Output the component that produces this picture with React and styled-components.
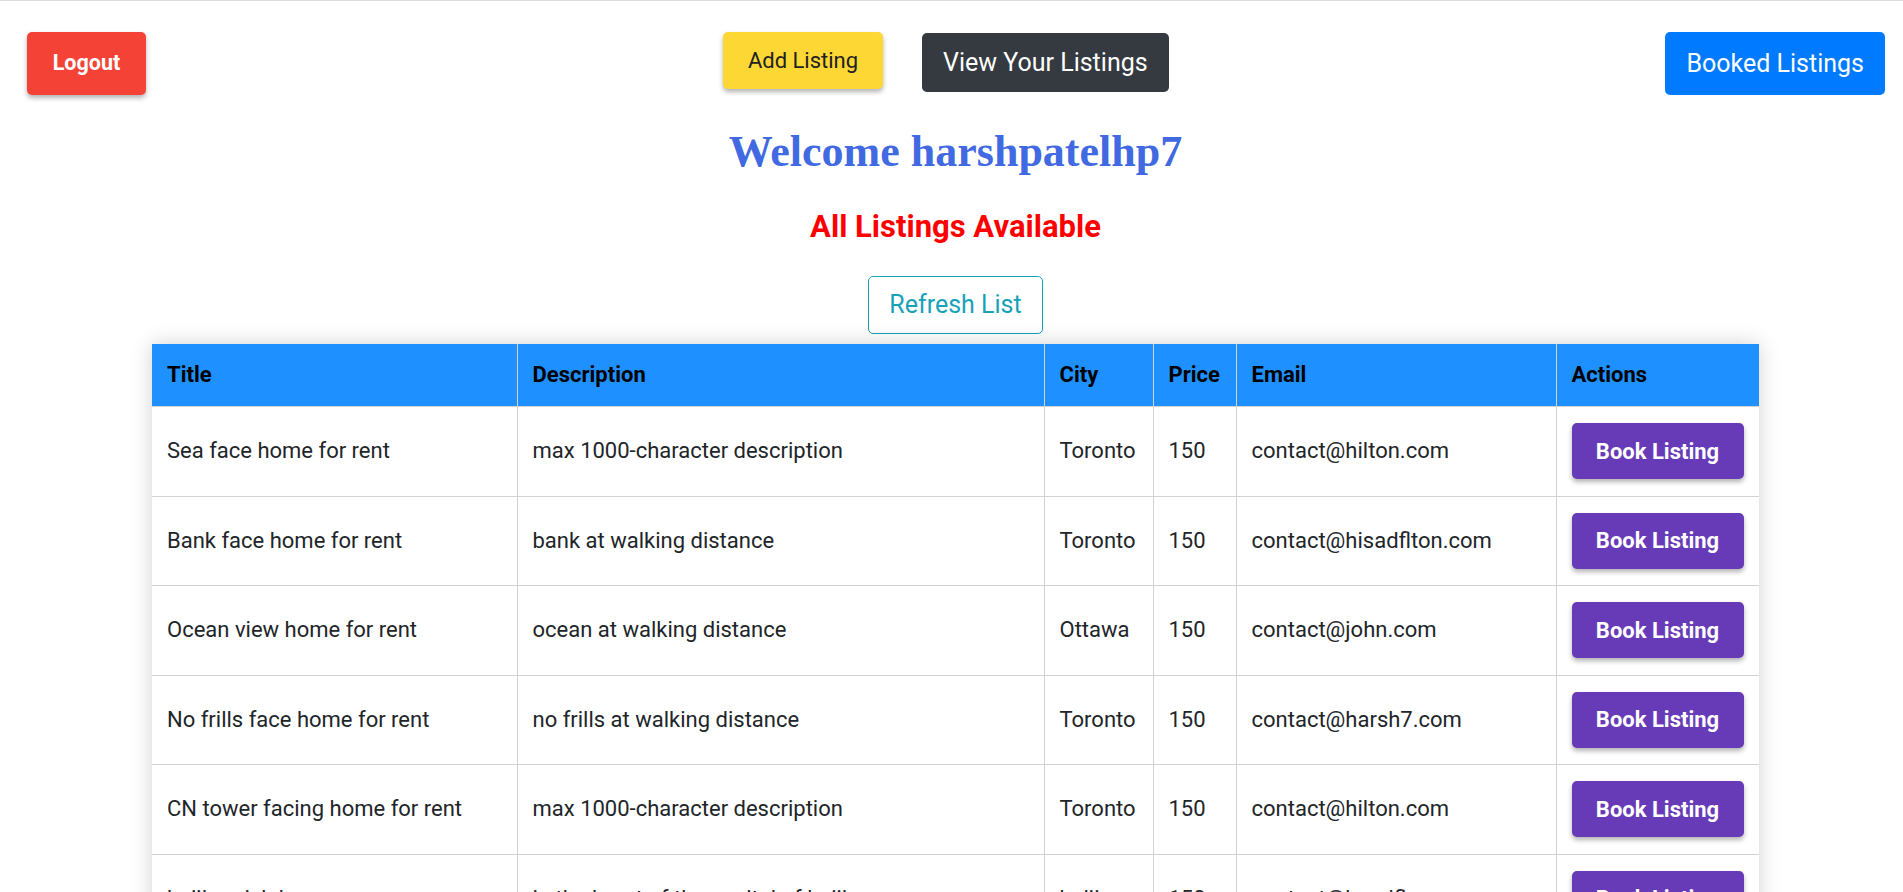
import React from 'react'
import styled, { createGlobalStyle } from 'styled-components'

const GlobalStyle = createGlobalStyle`
  html, body {
    margin: 0;
    padding: 0;
    overflow: hidden;
    background: #fff;
  }
  body {
    font-family: Roboto, "Liberation Sans", Arial, sans-serif;
    color: #212529;
  }
`

const Page = styled.div`
  border-top: 1px solid #dcdcdc;
`

const NavBar = styled.div`
  display: flex;
  align-items: flex-start;
  padding: 31px 18px 0 27px;
`

const NavGroup = styled.div`
  display: flex;
  align-items: flex-start;
  gap: 39px;
  margin-left: 577px;
`

const Btn = styled.button`
  font-family: Roboto, "Liberation Sans", Arial, sans-serif;
  border: 1px solid transparent;
  border-radius: 5px;
  cursor: pointer;
  line-height: 1.5;
  display: inline-flex;
  align-items: center;
  justify-content: center;
`

const LogoutButton = styled(Btn)`
  background: #f44336;
  color: #fff;
  font-size: 21.5px;
  font-weight: 700;
  height: 63px;
  width: 119px;
  padding: 0;
  box-shadow: 0 3px 5px rgba(0, 0, 0, 0.3);
`

const AddButton = styled(Btn)`
  background: #fdd835;
  color: #212121;
  font-size: 22px;
  height: 57px;
  width: 160px;
  padding: 0;
  box-shadow: 0 3px 5px rgba(0, 0, 0, 0.3);
`

const LargeButton = styled(Btn)`
  background: ${p => p.$bg};
  color: #fff;
  font-size: 25px;
  height: ${p => p.$h}px;
  padding: 0 20px;
  margin-top: ${p => p.$top || 0}px;
  margin-left: ${p => (p.$push ? 'auto' : '0')};
`

const Content = styled.div`
  padding-left: 8px;
  display: flex;
  flex-direction: column;
  align-items: center;
`

const Welcome = styled.h1`
  font-family: "Liberation Serif", "Times New Roman", serif;
  font-weight: 700;
  font-size: 44px;
  line-height: 50px;
  color: royalblue;
  margin: 32px 0 0;
`

const SubTitle = styled.h2`
  font-size: 31px;
  line-height: 36px;
  font-weight: 700;
  color: red;
  margin: 32px 0 0;
`

const RefreshButton = styled(Btn)`
  margin-top: 31px;
  background: #fff;
  color: #17a2b8;
  border-color: #17a2b8;
  font-size: 25px;
  height: 58px;
  padding: 0 20px;
`

const Table = styled.table`
  margin-top: 10px;
  width: 1607px;
  table-layout: fixed;
  border-collapse: collapse;
  box-shadow: 0 0 20px rgba(0, 0, 0, 0.18);
  background: #fff;
`

const Th = styled.th`
  background: #1e90ff;
  color: #000;
  font-size: 22px;
  font-weight: 700;
  text-align: left;
  line-height: 30px;
  padding: 16px 15px;
  border-left: 1px solid #d3d3d3;
  border-bottom: 1px solid #d3d3d3;
  &:first-child { border-left: none; }
`

const Td = styled.td`
  font-size: 22px;
  line-height: 30px;
  padding: 16.25px 15px;
  vertical-align: middle;
  color: #212529;
  border-left: 1px solid #d3d3d3;
  border-bottom: 1px solid #d3d3d3;
  white-space: nowrap;
  overflow: hidden;
  &:first-child { border-left: none; }
`

const BookButton = styled(Btn)`
  background: #673ab7;
  color: #fff;
  font-size: 22px;
  font-weight: 700;
  height: 56px;
  width: 172px;
  padding: 0;
  box-shadow: 0 3px 5px rgba(0, 0, 0, 0.3);
`

const columns = [
  { name: 'Title', width: 365 },
  { name: 'Description', width: 527 },
  { name: 'City', width: 109 },
  { name: 'Price', width: 83 },
  { name: 'Email', width: 320 },
  { name: 'Actions', width: 203 },
]

const listings = [
  ['Sea face home for rent', 'max 1000-character description', 'Toronto', '150', 'contact@hilton.com'],
  ['Bank face home for rent', 'bank at walking distance', 'Toronto', '150', 'contact@hisadflton.com'],
  ['Ocean view home for rent', 'ocean at walking distance', 'Ottawa', '150', 'contact@john.com'],
  ['No frills face home for rent', 'no frills at walking distance', 'Toronto', '150', 'contact@harsh7.com'],
  ['CN tower facing home for rent', 'max 1000-character description', 'Toronto', '150', 'contact@hilton.com'],
  ['beijing rich home', 'in the heart of the capital of beijing', 'beijing', '150', 'contact@beadfl.com'],
]

export default function App() {
  return (
    <Page>
      <GlobalStyle />
      <NavBar>
        <LogoutButton>Logout</LogoutButton>
        <NavGroup>
          <AddButton>Add Listing</AddButton>
          <LargeButton $bg="#343a40" $h={59} $top={1}>View Your Listings</LargeButton>
        </NavGroup>
        <LargeButton $bg="#007bff" $h={63} $push>Booked Listings</LargeButton>
      </NavBar>
      <Content>
        <Welcome>Welcome harshpatelhp7</Welcome>
        <SubTitle>All Listings Available</SubTitle>
        <RefreshButton>Refresh List</RefreshButton>
        <Table>
          <colgroup>
            {columns.map(c => <col key={c.name} style={{ width: c.width }} />)}
          </colgroup>
          <thead>
            <tr>
              {columns.map(c => <Th key={c.name}>{c.name}</Th>)}
            </tr>
          </thead>
          <tbody>
            {listings.map((row, i) => (
              <tr key={i}>
                {row.map((cell, j) => <Td key={j}>{cell}</Td>)}
                <Td><BookButton>Book Listing</BookButton></Td>
              </tr>
            ))}
          </tbody>
        </Table>
      </Content>
    </Page>
  )
}
